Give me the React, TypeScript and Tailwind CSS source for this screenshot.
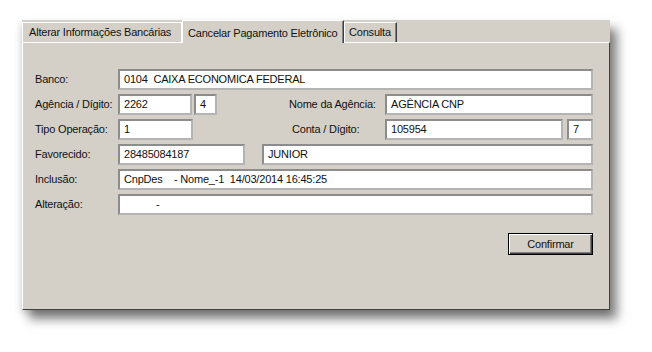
const font = { fontFamily: '"Liberation Sans", Arial, sans-serif' };

function Field({ value, className = "", pad = "pl-[4px]" }: { value: string; className?: string; pad?: string }) {
  return (
    <div
      className={`flex h-[21px] items-center whitespace-pre border-2 border-t-[#8c8c8c] border-l-[#8c8c8c] border-b-[#b4b4b4] border-r-[#b4b4b4] bg-white text-[11px] tracking-[-0.2px] text-[#111] ${pad} ${className}`}
    >
      {value}
    </div>
  );
}

function Label({ text, className = "w-[83px]" }: { text: string; className?: string }) {
  return <span className={`shrink-0 whitespace-nowrap text-[11px] tracking-[-0.2px] text-[#111] ${className}`}>{text}</span>;
}

export default function App() {
  return (
    <div className="h-[352px] w-[652px] overflow-hidden bg-white pl-[22px] pt-[20px]" style={font}>
      <div className="flex h-[290px] w-[588px] flex-col bg-[#d4d0c8] shadow-[7px_9px_10px_rgba(0,0,0,0.5),-2px_3px_6px_rgba(0,0,0,0.12)]">
        {/* tab strip */}
        <div className="flex h-[22px] shrink-0 items-end whitespace-nowrap text-[11px] tracking-[-0.2px] text-[#111]">
          <div className="flex h-[20px] w-[160px] items-center border-l border-t border-r border-white pl-[6px]">
            Alterar Informações Bancárias
          </div>
          <div className="relative z-10 -mb-px flex h-[23px] w-[162px] items-start border-l border-t border-r border-white border-r-[#404040] bg-[#d4d0c8] pl-[5px] pt-[4px] shadow-[inset_-1px_0_0_#808080]">
            Cancelar Pagamento Eletrônico
          </div>
          <div className="flex h-[20px] w-[53px] items-center border-l border-t border-r border-white border-r-[#404040] pl-[4px] shadow-[inset_-1px_0_0_#808080]">
            Consulta
          </div>
        </div>

        {/* panel */}
        <div className="flex flex-1 flex-col border border-white border-b-[#404040] border-r-[#404040] pl-[12px] pr-[16px] pt-[26px]">
          <div className="flex flex-col gap-[4px]">
            <div className="flex items-center">
              <Label text="Banco:" />
              <Field value="0104  CAIXA ECONOMICA FEDERAL" className="flex-1" />
            </div>
            <div className="flex items-center">
              <Label text="Agência / Dígito:" />
              <Field value="2262" className="w-[74px]" />
              <Field value="4" className="ml-[2px] w-[23px]" />
              <Label text="Nome da Agência:" className="ml-[72px] w-[96px]" />
              <Field value="AGÊNCIA CNP" className="flex-1" />
            </div>
            <div className="flex items-center">
              <Label text="Tipo Operação:" />
              <Field value="1" className="w-[75px]" />
              <Label text="Conta / Dígito:" className="ml-[99px] w-[93px]" />
              <Field value="105954" className="w-[178px]" />
              <Field value="7" className="ml-[4px] flex-1" />
            </div>
            <div className="flex items-center">
              <Label text="Favorecido:" />
              <Field value="28485084187" className="w-[127px]" />
              <Field value="JUNIOR" className="ml-[17px] flex-1" />
            </div>
            <div className="flex items-center">
              <Label text="Inclusão:" />
              <Field value="CnpDes    - Nome_-1  14/03/2014 16:45:25" className="flex-1" />
            </div>
            <div className="flex items-center">
              <Label text="Alteração:" />
              <Field value="-" pad="pl-[36px]" className="flex-1" />
            </div>
          </div>

          <div className="mt-[18px] flex justify-end">
            <button className="flex h-[22px] w-[85px] items-center justify-center border border-black bg-[#d4d0c8] text-[11px] tracking-[-0.2px] text-[#111] shadow-[inset_1px_1px_0_#fff,inset_-1px_-1px_0_#404040,inset_-2px_-2px_0_#808080]">
              Confirmar
            </button>
          </div>
        </div>
      </div>
    </div>
  );
}
